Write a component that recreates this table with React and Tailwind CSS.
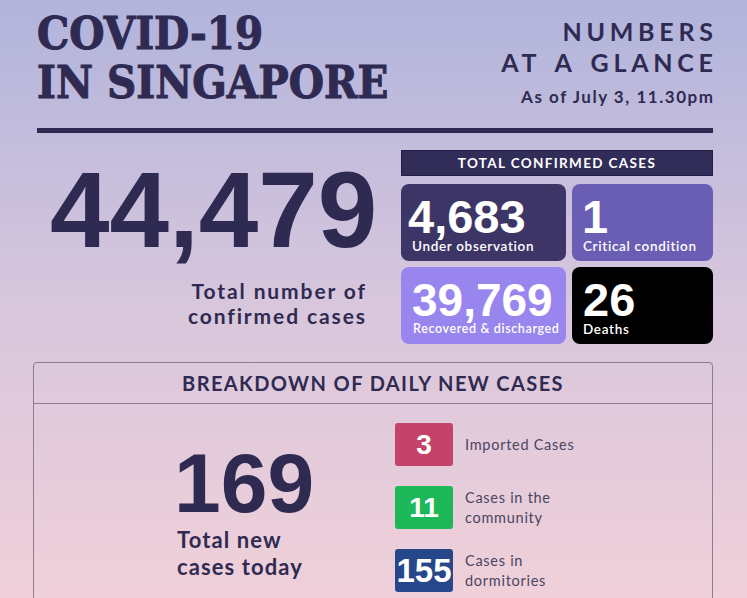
import React from "react";

const dark = "text-[#2f2a52]";

function StatBox({ bg, num, label, numSize = "text-[47px]", labelSize = "text-[13.5px]", pl = "pl-[8px]", lpl = "pl-[11px]" }) {
  return (
    <div className={`${bg} rounded-[8px] h-[77px] pt-[15px] text-white`}>
      <div className={`${pl} ${numSize} leading-[36px] font-bold font-['Liberation_Sans',Arial,sans-serif]`}>{num}</div>
      <div className={`mt-[3px] ${lpl} ${labelSize} leading-[16px] font-semibold tracking-[0.05em] font-['Lato',sans-serif]`}>{label}</div>
    </div>
  );
}

function Badge({ bg, num, size = "text-[28px]", lines }) {
  return (
    <div className="flex items-center">
      <div className={`${bg} w-[58px] h-[43px] rounded-[3px] flex items-center justify-center text-white font-bold ${size} font-['Liberation_Sans',Arial,sans-serif] leading-none`}>
        {num}
      </div>
      <div className="ml-[12px] text-[14.5px] leading-[20px] tracking-[0.05em] text-[#4a4562] font-['Lato',sans-serif]">
        {lines.map((l, i) => (
          <div key={i}>{l}</div>
        ))}
      </div>
    </div>
  );
}

export default function App() {
  return (
    <div className="w-[747px] h-[598px] overflow-hidden bg-gradient-to-b from-[#b1b4dc] via-[#d7c6dc] to-[#f0d0d9]">
      <div className="pl-[37px] pr-[34px]">
        {/* Header */}
        <div className="flex justify-between items-start">
          <h1 className={`pt-[9px] text-[45px] leading-[49px] font-bold ${dark} font-['DejaVu_Serif',serif] [font-stretch:condensed] [-webkit-text-stroke:1px_#2f2a52]`}>
            <div>COVID-19</div>
            <div>IN SINGAPORE</div>
          </h1>
          <div className={`text-right pt-[16px] ${dark} font-['Lato',sans-serif] font-bold`}>
            <div className="text-[25px] leading-[31px] tracking-[0.19em] mr-[-0.19em] [word-spacing:4px]">NUMBERS</div>
            <div className="text-[25px] leading-[31px] tracking-[0.19em] mr-[-0.19em] [word-spacing:4px]">AT A GLANCE</div>
            <div className="mt-[7px] text-[17px] leading-[24px] tracking-[0.09em] mr-[-0.09em]">As of July 3, 11.30pm</div>
          </div>
        </div>

        {/* Rule */}
        <div className="mt-[19px] h-[5px] bg-[#2f2a52]" />

        {/* Middle */}
        <div className="flex mt-[17px]">
          <div className="w-[364px] pt-[7px]">
            <div className={`pl-[13px] text-[107px] leading-[107px] font-bold ${dark} font-['Liberation_Sans',Arial,sans-serif]`}>44,479</div>
            <div className={`mt-[14px] pr-[36px] text-right text-[21px] leading-[25px] font-bold tracking-[0.09em] ${dark} font-['Lato',sans-serif]`}>
              <div className="mr-[-0.09em]">Total number of</div>
              <div className="mr-[-0.09em]">confirmed cases</div>
            </div>
          </div>
          <div className="w-[312px]">
            <div className="h-[26px] bg-[#322c59] border border-[#221d44] flex items-center justify-center text-white text-[13.5px] font-bold tracking-[0.1em] font-['Lato',sans-serif]">
              TOTAL CONFIRMED CASES
            </div>
            <div className="mt-[8px] grid grid-cols-[165px_141px] gap-[6px]">
              <StatBox bg="bg-[#3e3567]" num="4,683" label="Under observation" pl="pl-[7px]" lpl="pl-[11px]" />
              <StatBox bg="bg-[#6a5db4]" num="1" label="Critical condition" pl="pl-[10px]" lpl="pl-[11px]" />
              <StatBox bg="bg-[#9985ee]" num="39,769" label="Recovered & discharged" numSize="text-[46px]" labelSize="text-[12.5px]" pl="pl-[11px]" lpl="pl-[12px]" />
              <StatBox bg="bg-black" num="26" label="Deaths" pl="pl-[11px]" lpl="pl-[11px]" />
            </div>
          </div>
        </div>

        {/* Breakdown */}
        <div className="-ml-[4px] mt-[18px] border border-[#8b7d92] rounded-[4px] h-[260px]">
          <div className={`h-[41px] border-b border-[#8b7d92] flex items-center justify-center text-[20px] font-bold tracking-[0.07em] ${dark} font-['Lato',sans-serif]`}>
            BREAKDOWN OF DAILY NEW CASES
          </div>
          <div className="flex pl-[143px]">
            <div className="w-[218px] pt-[37px]">
              <div className={`text-[84px] leading-[84px] font-bold ${dark} font-['Liberation_Sans',Arial,sans-serif] -ml-[3px]`}>169</div>
              <div className={`mt-[1px] text-[22px] leading-[27px] font-bold tracking-[0.05em] ${dark} font-['Lato',sans-serif]`}>
                <div>Total new</div>
                <div>cases today</div>
              </div>
            </div>
            <div className="pt-[19px] flex flex-col gap-[20px]">
              <Badge bg="bg-[#c3436a]" num="3" lines={["Imported Cases"]} />
              <Badge bg="bg-[#1db85a]" num="11" lines={["Cases in the", "community"]} />
              <Badge bg="bg-[#27478b]" num="155" size="text-[33px]" lines={["Cases in", "dormitories"]} />
            </div>
          </div>
        </div>
      </div>
    </div>
  );
}
